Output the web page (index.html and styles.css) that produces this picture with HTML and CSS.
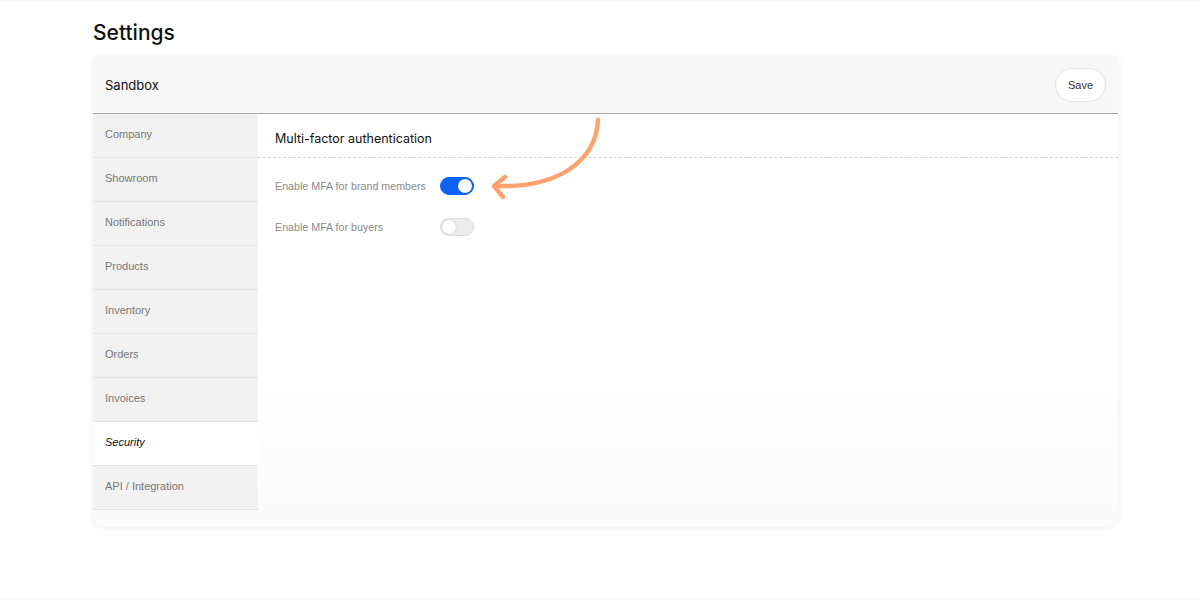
FILE: index.html
```html
<html>
<head>
<meta charset="utf-8">
<title>Settings</title>
<link rel="stylesheet" href="styles.css">
</head>
<body>
<div class="page">
    <h1 class="title">Settings</h1>

    <div class="card">
        <div class="card-head">
            <div class="card-name">Sandbox</div>
            <button class="save">Save</button>
        </div>

        <div class="card-body">
            <ul class="menu">
                <li class="menu-item">Company</li>
                <li class="menu-item">Showroom</li>
                <li class="menu-item">Notifications</li>
                <li class="menu-item">Products</li>
                <li class="menu-item">Inventory</li>
                <li class="menu-item">Orders</li>
                <li class="menu-item">Invoices</li>
                <li class="menu-item active">Security</li>
                <li class="menu-item">API / Integration</li>
            </ul>

            <div class="content">
                <div class="section-title">Multi-factor authentication</div>

                <div class="options">
                    <div class="option">
                        <span class="option-label">Enable MFA for brand members</span>
                        <span class="toggle on"><span class="knob"></span></span>
                    </div>
                    <div class="option">
                        <span class="option-label">Enable MFA for buyers</span>
                        <span class="toggle"><span class="knob"></span></span>
                    </div>
                </div>

                <!-- hint arrow pointing at the first switch -->
                <svg class="arrow" width="120" height="90" viewBox="0 0 120 90">
                    <path d="M110 6 C108 46 72 74 8 72" fill="none" stroke="#ffa26f" stroke-width="4.5" stroke-linecap="round"/>
                    <path d="M17 63 L6 72 L15 83" fill="none" stroke="#ffa26f" stroke-width="4.5" stroke-linecap="round" stroke-linejoin="round"/>
                </svg>
            </div>
        </div>
    </div>
</div>
</body>
</html>
```

FILE: styles.css
```css
body {
    margin: 0;
    height: 600px;
    font-family: Inter, "Liberation Sans", sans-serif;
    background: linear-gradient(#f4f4f4, #fff 2px, #fff 597px, #f4f4f4);
}

.page {
    width: 1025px;
    margin-left: 93px;
    padding-top: 19px;
}

.title {
    margin: 0 0 9px 0;
    font-size: 21px;
    line-height: 28px;
    font-weight: 500;
    color: #111;
}

.card {
    border-radius: 4px 4px 12px 12px;
    background: #fff;
    box-shadow: 0 1px 6px rgba(0, 0, 0, 0.08);
    overflow: hidden;
}

.card-head {
    display: flex;
    align-items: center;
    justify-content: space-between;
    height: 57px;
    padding: 0 12px 0 12px;
    background: #f7f7f7;
    border-bottom: 1px solid #aaa;
}

.card-name {
    font-size: 13px;
    color: #111;
}

.save {
    width: 51px;
    height: 34px;
    border: 1px solid #e3e3e3;
    border-radius: 17px;
    background: #fff;
    font-family: "Liberation Sans", sans-serif;
    font-size: 11px;
    color: #333;
}

.card-body {
    display: flex;
    height: 413px;
    background: linear-gradient(#fff 65%, #fafafa);
}

.menu {
    width: 165px;
    margin: 0;
    padding: 0;
    list-style: none;
    align-self: flex-start;
}

.menu-item {
    height: 43px;
    line-height: 41px;
    padding-left: 12px;
    border-bottom: 1px solid #e2e2e2;
    background: #f2f2f2;
    font-family: "Liberation Sans", sans-serif;
    font-size: 11px;
    color: #777;
}

.menu-item.active {
    background: #fff;
    color: #111;
    font-style: italic;
}

.content {
    position: relative;
    flex: 1;
}

.section-title {
    height: 43px;
    line-height: 50px;
    padding-left: 17px;
    border-bottom: 1px dashed #d4d4d4;
    font-size: 12.5px;
    color: #111;
}

.options {
    padding-top: 7px;
}

.option {
    display: flex;
    align-items: center;
    height: 41px;
    padding-left: 17px;
}

.option-label {
    width: 165px;
    font-family: "Liberation Sans", sans-serif;
    font-size: 10.7px;
    color: #8a8a8a;
}

.toggle {
    display: flex;
    align-items: center;
    box-sizing: border-box;
    width: 34px;
    height: 18px;
    padding: 1px;
    border: 1px solid #d6dce8;
    border-radius: 9px;
    background: #ececec;
}

.toggle .knob {
    width: 14px;
    height: 14px;
    border-radius: 50%;
    background: #fff;
    box-shadow: 0 0 1px rgba(0, 0, 0, 0.3);
}

.toggle.on {
    justify-content: flex-end;
    border-color: #0a63f6;
    background: #0a63f6;
}

.arrow {
    position: absolute;
    left: 230px;
    top: 0;
}
```
